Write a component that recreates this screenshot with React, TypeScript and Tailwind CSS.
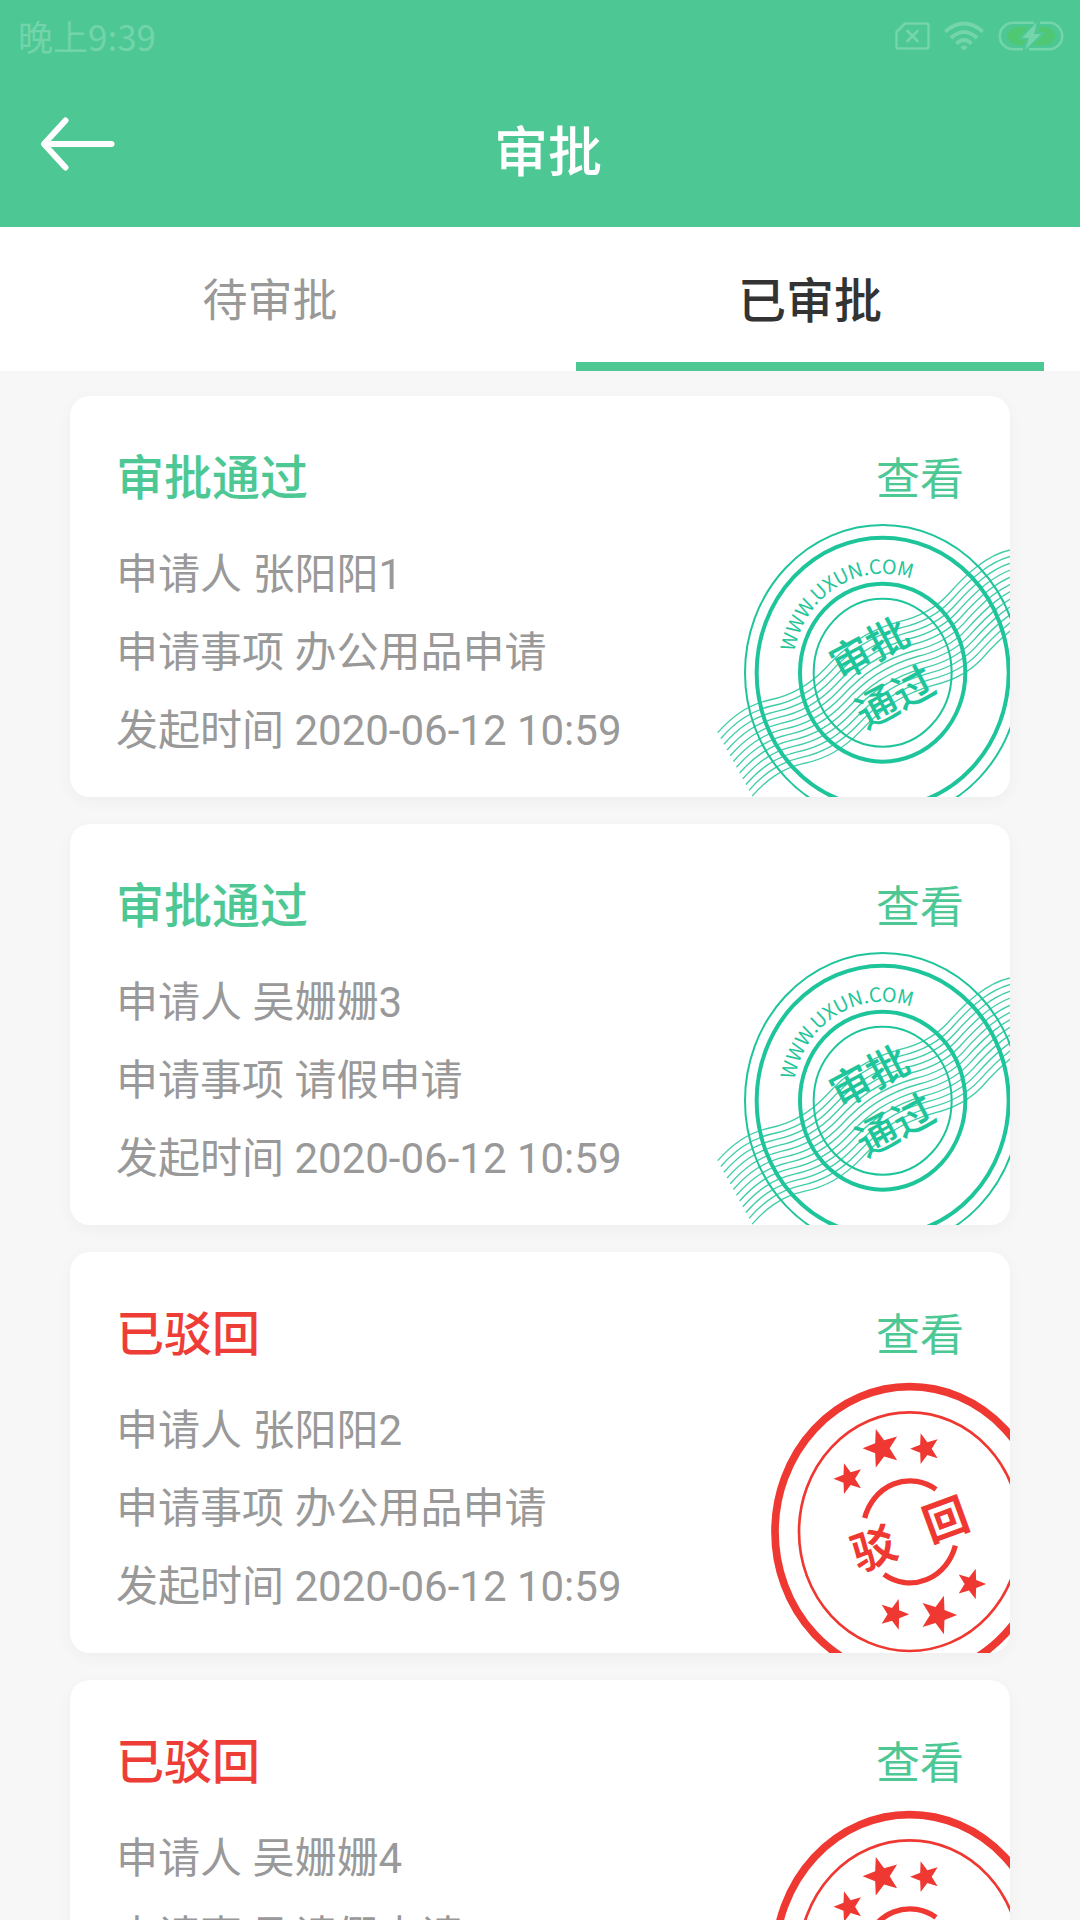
import { useState } from 'react'
import clsx from 'clsx'

interface Approval {
  id: number
  status: 'passed' | 'rejected'
  applicant: string
  subject: string
  time: string
}

const approvals: Approval[] = [
  { id: 1, status: 'passed', applicant: '张阳阳1', subject: '办公用品申请', time: '2020-06-12 10:59' },
  { id: 2, status: 'passed', applicant: '吴姗姗3', subject: '请假申请', time: '2020-06-12 10:59' },
  { id: 3, status: 'rejected', applicant: '张阳阳2', subject: '办公用品申请', time: '2020-06-12 10:59' },
  { id: 4, status: 'rejected', applicant: '吴姗姗4', subject: '请假申请', time: '2020-06-12 10:59' },
]

const tabs = [
  { key: 'pending', label: '待审批' },
  { key: 'done', label: '已审批' },
]

export default function App() {
  const [tab, setTab] = useState('done')

  return (
    <div className="flex h-screen flex-col overflow-hidden bg-[#f7f7f7] font-[Roboto,'Noto_Sans_CJK_SC',sans-serif]" lang="zh-CN">
      <header className="bg-[#4dc894] text-white">
        <StatusBar />
        <div className="relative flex h-[155px] items-center justify-center pt-2 pl-4">
          <button type="button" aria-label="返回" className="absolute top-11 left-10">
            <svg width="76" height="56" viewBox="0 0 76 56" fill="none" stroke="currentColor" strokeWidth="6" strokeLinecap="round" strokeLinejoin="round">
              <path d="M25.500 4.500L4 28L25.500 51.500M6 28H71.500" />
            </svg>
          </button>
          <h1 className="text-[54px] leading-[72px] font-medium">审批</h1>
        </div>
      </header>

      <div role="tablist" className="grid h-36 shrink-0 grid-cols-2 bg-white">
        {tabs.map(t => (
          <button
            key={t.key}
            type="button"
            role="tab"
            aria-selected={tab === t.key}
            onClick={() => setTab(t.key)}
            className={clsx(
              'mx-9 border-b-9 pt-3.5',
              tab === t.key
                ? 'border-[#4dc894] text-[48px] font-medium text-[#333]'
                : 'border-transparent text-[45px] text-[#999]',
            )}
          >
            {t.label}
          </button>
        ))}
      </div>

      <main className="flex min-h-0 flex-1 flex-col gap-[27px] overflow-y-auto px-[70px] pt-[25px] [scrollbar-width:none]">
        {approvals.map(a => <ApprovalCard key={a.id} item={a} />)}
      </main>
    </div>
  )
}

function ApprovalCard({ item }: { item: Approval }) {
  const passed = item.status === 'passed'
  return (
    <article className="relative shrink-0 overflow-hidden rounded-[20px] bg-white px-[46px] pt-[47px] pb-[27px] shadow-[0_4px_16px_rgba(0,0,0,0.04)]">
      <div className="absolute right-0 bottom-0">
        {passed ? <PassedStamp /> : <RejectedStamp />}
      </div>
      <div className="relative flex h-[93px] items-start justify-between">
        <h2 className={clsx('text-[48px] leading-[72px] font-medium', passed ? 'text-[#4dc894]' : 'text-[#ee3d37]')}>
          {passed ? '审批通过' : '已驳回'}
        </h2>
        <a href="#detail" className="text-[44px] leading-[74px] text-[#4dc894]">查看</a>
      </div>
      <Row label="申请人" value={item.applicant} />
      <Row label="申请事项" value={item.subject} />
      <Row label="发起时间" value={item.time} />
    </article>
  )
}

function Row({ label, value }: { label: string; value: string }) {
  return (
    <p className="relative text-[42px] leading-[78px] text-[#999]">{label} {value}</p>
  )
}

function StatusBar() {
  return (
    <div className="flex h-[72px] items-center justify-between pr-4 pl-[18px] text-white/22">
      <span className="font-['Noto_Sans_CJK_SC',sans-serif] text-[35px]">晚上9:39</span>
      <div className="flex items-center gap-[14px]">
        <svg width="35" height="28" viewBox="0 0 35 28" fill="none" stroke="currentColor" strokeWidth="2.500" strokeLinejoin="round">
          <path d="M10 1.500H32Q33.500 1.500 33.500 3V25Q33.500 26.500 32 26.500H3Q1.500 26.500 1.500 25V10Z" />
          <path d="M12.500 9L22.500 19M22.500 9L12.500 19" strokeWidth="3" strokeLinecap="round" />
        </svg>
        <svg width="40" height="30" viewBox="0 0 40 30" fill="none" stroke="currentColor" strokeWidth="4">
          <path d="M1.300 10.500Q20 -5.500 38.700 10.500M7 17Q20 5 33 17M12.500 22.500Q20 15.500 27.500 22.500" />
          <path d="M20 24.500Q22 24.500 23.500 26L20 29.500L16.500 26Q18 24.500 20 24.500Z" fill="currentColor" stroke="none" />
        </svg>
        <svg width="66" height="30" viewBox="0 0 66 30" fill="none">
          <path d="M31 6H18.500A9 9 0 0 0 18.500 24H25L28 18.500H20ZM41.500 6H48A9 9 0 0 1 48 24H35L48 11H40Z" fill="#50c873" />
          <path d="M36 1.800H15A13.200 13.200 0 0 0 15 28.200H25M42 1.800H51A13.200 13.200 0 0 1 51 28.200H31" stroke="currentColor" strokeWidth="2.600" />
          <path d="M39 1L24 17H31L27 29L43 13H36Z" fill="currentColor" />
        </svg>
      </div>
    </div>
  )
}

// the postmark band is one wavy line repeated down the diagonal
const waves = Array.from({ length: 12 }, (_, i) => i)

function PassedStamp() {
  return (
    <svg width="294" height="274" viewBox="50 71 882 822" fill="none" stroke="#1fc59a" role="img" aria-label="审批通过">
      <g strokeWidth="4" opacity="0.85">
        {waves.map(i => (
          <path
            key={i}
            transform={`translate(${i * 9.4} ${i * 17.3})`}
            d="M55 700C95 655 140 618 210 602C270 590 325 563 380 505C440 440 500 395 600 367C650 355 705 330 745 287C800 225 860 168 932 152C980 140 1030 120 1060 95"
          />
        ))}
      </g>
      <g strokeWidth="6">
        <ellipse cx="550" cy="520" rx="413" ry="443" />
        <ellipse cx="550" cy="520" rx="207" ry="222" />
      </g>
      <g strokeWidth="12">
        <ellipse cx="550" cy="520" rx="378" ry="405" />
        <ellipse cx="550" cy="520" rx="248" ry="267" />
      </g>
      <path id="stamp-arc" d="M285 458A270 290 0 0 1 820 520" stroke="none" />
      <g fill="#1fc59a" stroke="none" className="font-['Noto_Sans_CJK_SC',sans-serif]">
        <text fontSize="59"><textPath href="#stamp-arc">WWW.UXUN.COM</textPath></text>
        <g fontSize="124" textAnchor="middle" className="font-medium">
          <text transform="translate(509 446) rotate(-28)" y="46">审批</text>
          <text transform="translate(587 593) rotate(-28)" y="46">通过</text>
        </g>
      </g>
    </svg>
  )
}

const stars = [
  { x: 397, y: 266, r: 59, dir: -1 },
  { x: 528, y: 267, r: 47, dir: -1 },
  { x: 298, y: 357, r: 47, dir: -1 },
  { x: 434, y: 764, r: 47, dir: 1 },
  { x: 566, y: 766, r: 59, dir: 1 },
  { x: 665, y: 673, r: 47, dir: 1 },
]

function starPoints(x: number, y: number, r: number, dir: number) {
  return Array.from({ length: 10 }, (_, i) => {
    const a = (i * Math.PI) / 5
    const len = i % 2 ? r * 0.42 : r
    return `${x + dir * len * Math.cos(a) * 0.97},${y + len * Math.sin(a) * 1.03}`
  }).join(' ')
}

function RejectedStamp() {
  return (
    <svg width="240" height="272" viewBox="62 64 720 816" fill="none" stroke="#ee3831" role="img" aria-label="驳回">
      <ellipse cx="481" cy="516" rx="404" ry="435" strokeWidth="23" />
      <ellipse cx="481" cy="516" rx="332" ry="358" strokeWidth="8" />
      <path d="M346 475A141 152 0 0 1 560 389M404 644A141 152 0 0 0 618 558" strokeWidth="16" />
      <g fill="#ee3831" stroke="none">
        {stars.map(s => <polygon key={`${s.x}-${s.y}`} points={starPoints(s.x, s.y, s.r, s.dir)} />)}
        <g fontSize="134" textAnchor="middle" className="font-['Noto_Sans_CJK_SC',sans-serif] font-bold">
          <text transform="translate(373 565) rotate(-20)" y="51">驳</text>
          <text transform="translate(588 478) rotate(-20)" y="51">回</text>
        </g>
      </g>
    </svg>
  )
}
